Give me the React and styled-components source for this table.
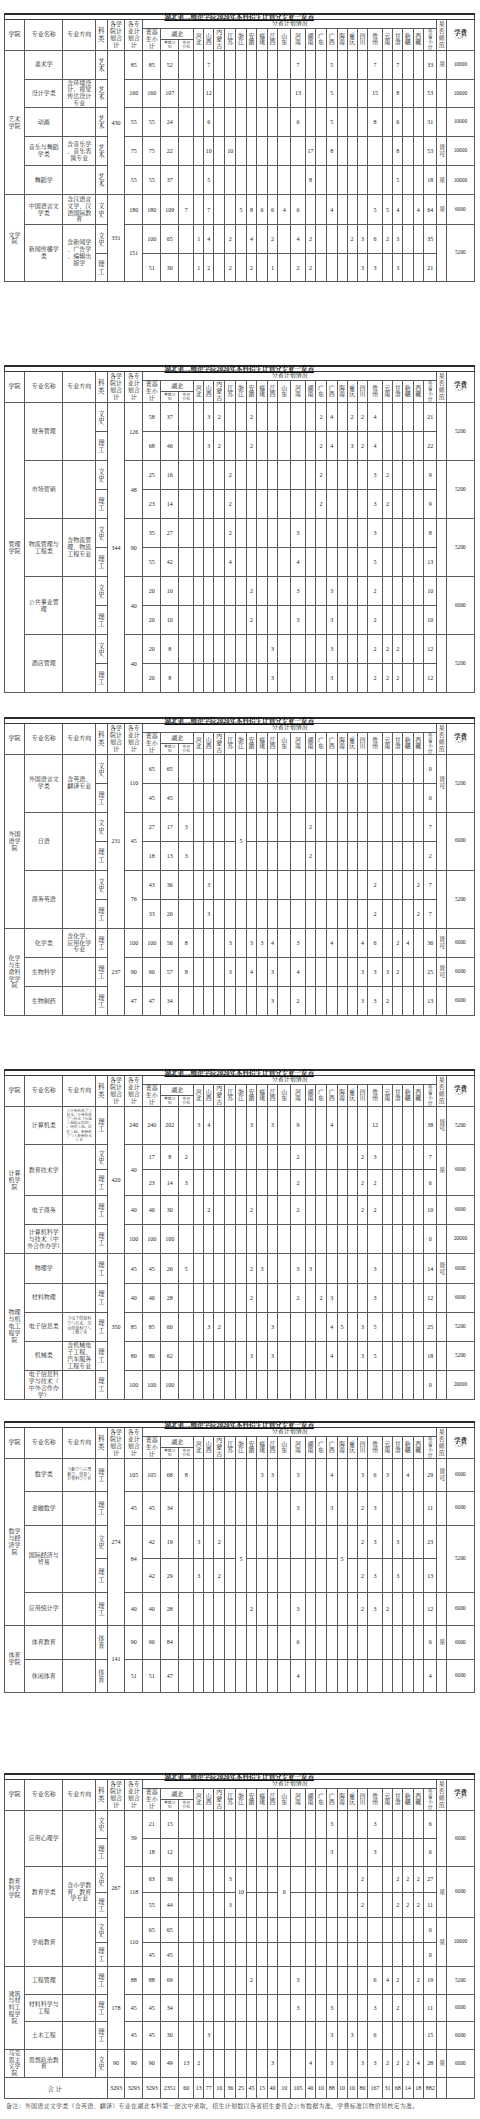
import React from "react";
import styled, { createGlobalStyle } from "styled-components";

const GlobalStyle = createGlobalStyle`
html, body {
  margin: 0;
  padding: 0;
  background: #fff;
}
body {
  font-family: "Liberation Serif", "Noto Serif CJK SC", "Noto Sans CJK SC", serif;
  color: #1a1a1a;
}
`;

const PROVS = ["河北", "山西", "内蒙古", "江苏", "浙江", "安徽", "福建", "江西", "山东", "河南", "湖南", "广东", "广西", "海南", "重庆", "四川", "贵州", "云南", "甘肃", "新疆", "西藏"];

const COLS = [20, 38.3, 32.7, 11.7, 17.6, 18, 18, 18, 15,
    10, 10, 11, 11, 10.7, 10.3, 10.4, 10.6, 13, 14.4, 10.6, 10.7, 10.7, 10, 10, 10.6, 14.4, 10.6, 10, 10.4, 10.6,
    13, 10, 27];

const TITLE = "湖北第二师范学院2020年本科招生计划分专业一览表";

// ---------------- data ----------------

const TABLES = [
    [
        { h: 28.6, c: ["艺术学院", 5], m: ["美术学"], d: [""], k: "艺术", ct: ["430", 5], mt: ["85"], s: 85, hb: 52, p: { 山西: 7, 河南: 7, 广西: 5, 贵州: 7, 甘肃: 7 }, o: 33, n: ["是"], f: ["10000"] },
        { h: 28.4, m: ["设计学类"], d: ["含环境设计、视觉传达设计专业"], k: "艺术", mt: ["160"], s: 160, hb: 107, p: { 山西: 12, 河南: 13, 广西: 5, 贵州: 15, 甘肃: 8 }, o: 53, n: [""], f: ["10000"] },
        { h: 29, m: ["动画"], d: [""], k: "艺术", mt: ["55"], s: 55, hb: 24, p: { 山西: 6, 河南: 6, 广西: 5, 贵州: 8, 甘肃: 6 }, o: 31, n: [""], f: ["10000"] },
        { h: 29, m: ["音乐与舞蹈学类"], d: ["含音乐学、音乐表演专业"], k: "艺术", mt: ["75"], s: 75, hb: 22, p: { 山西: 10, 江苏: 10, 湖南: 17, 广西: 8, 甘肃: 8 }, o: 53, n: ["皆可"], f: ["10000"] },
        { h: 29.3, m: ["舞蹈学"], d: [""], k: "艺术", mt: ["55"], s: 55, hb: 37, p: { 山西: 5, 湖南: 8, 甘肃: 5 }, o: 18, n: ["是"], f: ["10000"] },
        { h: 29.3, c: ["文学院", 3], m: ["中国语言文学类"], d: ["含汉语言文学、汉语国际教育"], k: "文史", ct: ["331", 3], mt: ["180"], s: 180, hb: 109, zx: 7, p: { 山西: 7, 浙江: 5, 安徽: 8, 福建: 6, 江西: 6, 山东: 4, 河南: 6, 广西: 4, 贵州: 5, 云南: 5, 甘肃: 4, 西藏: 4 }, o: 64, n: ["是"], f: ["6000"] },
        { h: 29, m: ["新闻传播学类", 2], d: ["含新闻学、广告学、编辑出版学", 2], k: "文史", mt: ["151", 2], s: 100, hb: 65, p: { 河北: 1, 山西: 4, 江苏: 2, 安徽: 4, 江西: 2, 河南: 4, 湖南: 2, 重庆: 2, 四川: 3, 贵州: 6, 云南: 2, 甘肃: 3 }, o: 35, n: ["", 2], f: ["5200", 2] },
        { h: 28.7, k: "理工", s: 51, hb: 30, p: { 河北: 1, 山西: 2, 江苏: 2, 安徽: 2, 江西: 1, 河南: 2, 湖南: 2, 四川: 3, 贵州: 3, 甘肃: 3 }, o: 21 },
    ],
    [
        { h: 29.05, c: ["管理学院", 10], m: ["财务管理", 2], d: ["", 2], k: "文史", ct: ["344", 10], mt: ["126", 2], s: 58, hb: 37, p: { 山西: 3, 内蒙古: 2, 安徽: 2, 广东: 2, 广西: 4, 重庆: 2, 四川: 2, 贵州: 4 }, o: 21, n: ["", 2], f: ["5200", 2] },
        { h: 29.05, k: "理工", s: 68, hb: 46, p: { 山西: 3, 内蒙古: 2, 安徽: 2, 广东: 2, 广西: 4, 重庆: 3, 四川: 2, 贵州: 4 }, o: 22 },
        { h: 29.05, m: ["市场营销", 2], d: ["", 2], k: "文史", mt: ["48", 2], s: 25, hb: 16, p: { 江苏: 2, 广东: 2, 贵州: 3, 云南: 2 }, o: 9, n: ["", 2], f: ["5200", 2] },
        { h: 29.05, k: "理工", s: 23, hb: 14, p: { 江苏: 2, 广东: 2, 贵州: 3, 云南: 2 }, o: 9 },
        { h: 29.05, m: ["物流管理与工程类", 2], d: ["含物流管理、物流工程专业", 2], k: "文史", mt: ["90", 2], s: 35, hb: 27, p: { 江苏: 2, 河南: 3, 贵州: 3 }, o: 8, n: ["", 2], f: ["5200", 2] },
        { h: 29.05, k: "理工", s: 55, hb: 42, p: { 江苏: 4, 河南: 4, 贵州: 5 }, o: 13 },
        { h: 29.05, m: ["公共事业管理", 2], d: ["", 2], k: "文史", mt: ["40", 2], s: 20, hb: 10, p: { 安徽: 2, 河南: 3, 广西: 3, 贵州: 2 }, o: 10, n: ["", 2], f: ["6000", 2] },
        { h: 29.05, k: "理工", s: 20, hb: 10, p: { 安徽: 2, 河南: 3, 广西: 3, 贵州: 2 }, o: 10 },
        { h: 29.05, m: ["酒店管理", 2], d: ["", 2], k: "文史", mt: ["40", 2], s: 20, hb: 8, p: { 江西: 3, 广西: 3, 贵州: 2, 云南: 2, 甘肃: 2 }, o: 12, n: ["", 2], f: ["5200", 2] },
        { h: 29.05, k: "理工", s: 20, hb: 8, p: { 江西: 3, 广西: 3, 贵州: 2, 云南: 2, 甘肃: 2 }, o: 12 },
    ],
    [
        { h: 29, c: ["外国语学院", 6], m: ["外国语言文学类", 2], d: ["含英语、翻译专业", 2], k: "文史", ct: ["231", 6], mt: ["110", 2], s: 65, hb: 65, o: 0, n: ["皆可", 2], f: ["5200", 2] },
        { h: 28.7, k: "理工", s: 45, hb: 45, o: 0 },
        { h: 29, m: ["日语", 2], d: ["", 2], k: "文史", mt: ["45", 2], s: 27, hb: 17, zx: 3, p: { 浙江: [5, 2], 湖南: 2 }, o: 7, n: ["", 2], f: ["6000", 2] },
        { h: 29, k: "理工", s: 18, hb: 13, zx: 3, p: { 湖南: 2 }, skip: ["浙江"], o: 2 },
        { h: 29.3, m: ["商务英语", 2], d: ["", 2], k: "文史", mt: ["76", 2], s: 43, hb: 36, p: { 山西: 3, 贵州: 2, 西藏: 2 }, o: 7, n: ["", 2], f: ["5200", 2] },
        { h: 29, k: "理工", s: 33, hb: 26, p: { 山西: 3, 贵州: 2, 西藏: 2 }, o: 7 },
        { h: 29, c: ["化学与生命科学学院", 3], m: ["化学类"], d: ["含化学、应用化学专业"], k: "理工", ct: ["237", 3], mt: ["100"], s: 100, hb: 56, zx: 8, p: { 江苏: 3, 安徽: 3, 福建: 3, 江西: 4, 河南: 3, 广西: 4, 四川: 4, 贵州: 6, 甘肃: 2, 新疆: 4 }, o: 36, n: ["皆可"], f: ["6000"] },
        { h: 29, m: ["生物科学"], d: [""], k: "理工", mt: ["90"], s: 90, hb: 57, zx: 8, p: { 江苏: 3, 安徽: 4, 江西: 3, 河南: 4, 四川: 3, 贵州: 3, 云南: 3, 甘肃: 2 }, o: 25, n: ["皆可"], f: ["6000"] },
        { h: 29.3, m: ["生物制药"], d: [""], k: "理工", mt: ["47"], s: 47, hb: 34, p: { 江西: 3, 河南: 2, 四川: 3, 贵州: 3, 云南: 2 }, o: 13, n: [""], f: ["6000"] },
    ],
    [
        { h: 38, c: ["计算机学院", 5], m: ["计算机类"], d: ["含计算机科学与技术、计算机科学与技术（卓越工程师实验班）、网络工程、软件工程、数据科学与大数据技术专业", 1, 3.6], k: "理工", ct: ["420", 5], mt: ["240"], s: 240, hb: 202, p: { 河北: 3, 山西: 4, 安徽: 3, 江西: 3, 河南: 9, 广西: 4, 贵州: 12 }, o: 38, n: ["皆可"], f: ["5200"] },
        { h: 25.4, m: ["教育技术学", 2], d: ["", 2], k: "文史", mt: ["40", 2], s: 17, hb: 8, zx: 2, p: { 河南: 2, 四川: 2, 贵州: 3 }, o: 7, n: ["是", 2], f: ["6000", 2] },
        { h: 25.6, k: "理工", s: 23, hb: 14, zx: 3, p: { 河南: 2, 四川: 2, 贵州: 2 }, o: 6 },
        { h: 29, m: ["电子商务"], d: [""], k: "理工", mt: ["40"], s: 40, hb: 30, p: { 山西: 2, 安徽: 2, 河南: 2, 四川: 2, 贵州: 2 }, o: 10, n: [""], f: ["6000"] },
        { h: 29.4, m: ["计算机科学与技术（中外合作办学）"], d: [""], k: "理工", mt: ["100"], s: 100, hb: 100, o: 0, n: [""], f: ["20000"] },
        { h: 29.3, c: ["物理与机电工程学院", 5], m: ["物理学"], d: [""], k: "理工", ct: ["350", 5], mt: ["45"], s: 45, hb: 26, zx: 5, p: { 安徽: 2, 福建: 3, 河南: 3, 湖南: 3, 贵州: 3 }, o: 14, n: ["皆可"], f: ["6000"] },
        { h: 29, m: ["材料物理"], d: [""], k: "理工", mt: ["40"], s: 40, hb: 28, p: { 安徽: 2, 河南: 2, 广东: 2, 广西: 3, 贵州: 3 }, o: 12, n: [""], f: ["6000"] },
        { h: 29, m: ["电子信息类"], d: ["含电子信息科学与技术、光电信息科学与工程专业", 1, 4], k: "理工", mt: ["85"], s: 85, hb: 60, p: { 山西: 3, 内蒙古: 2, 江西: 3, 广西: 4, 海南: 5, 四川: 3, 贵州: 5 }, o: 25, n: [""], f: ["5200"] },
        { h: 29, m: ["机械类"], d: ["含机械电子工程、汽车服务工程专业"], k: "理工", mt: ["80"], s: 80, hb: 62, p: { 安徽: 3, 江西: 3, 广西: 4, 四川: 3, 贵州: 5 }, o: 18, n: [""], f: ["5200"] },
        { h: 29, m: ["电子信息科学与技术（中外合作办学）"], d: [""], k: "理工", mt: ["100"], s: 100, hb: 100, o: 0, n: [""], f: ["20000"] },
    ],
    [
        { h: 32.7, c: ["数学与经济学院", 5], m: ["数学类"], d: ["含数学与应用数学、信息与计算科学专业", 1, 4], k: "理工", ct: ["274", 5], mt: ["105"], s: 105, hb: 68, zx: 8, p: { 福建: 3, 江西: 3, 河南: 3, 广西: 4, 四川: 3, 贵州: 6, 云南: 3, 新疆: 4 }, o: 29, n: ["皆可"], f: ["6000"] },
        { h: 34, m: ["金融数学"], d: [""], k: "理工", mt: ["45"], s: 45, hb: 34, p: { 河南: 3, 广西: 3, 四川: 2, 贵州: 3 }, o: 11, n: [""], f: ["6000"] },
        { h: 33.7, m: ["国际经济与贸易", 2], d: ["", 2], k: "文史", mt: ["84", 2], s: 42, hb: 19, p: { 河北: 3, 内蒙古: 2, 浙江: [5, 2], 海南: [5, 2], 四川: 2, 贵州: 3, 甘肃: 3 }, o: 23, n: ["", 2], f: ["5200", 2] },
        { h: 33.3, k: "理工", s: 42, hb: 29, p: { 河北: 3, 内蒙古: 2, 四川: 2, 贵州: 3, 甘肃: 3 }, skip: ["浙江", "海南"], o: 13 },
        { h: 33.3, m: ["应用统计学"], d: [""], k: "理工", mt: ["40"], s: 40, hb: 28, p: { 安徽: 2, 河南: 3, 四川: 2, 贵州: 3, 云南: 2 }, o: 12, n: [""], f: ["6000"] },
        { h: 34, c: ["体育学院", 2], m: ["体育教育"], d: [""], k: "体育", ct: ["141", 2], mt: ["90"], s: 90, hb: 84, p: { 河南: 6 }, o: 6, n: ["是"], f: ["6000"] },
        { h: 33.4, m: ["休闲体育"], d: [""], k: "体育", mt: ["51"], s: 51, hb: 47, p: { 河南: 4 }, o: 4, n: [""], f: ["6000"] },
    ],
    [
        { h: 27.7, c: ["教育科学学院", 6], m: ["应用心理学", 2], d: ["", 2], k: "文史", ct: ["267", 6], mt: ["39", 2], s: 21, hb: 15, p: { 广西: 3, 贵州: 3 }, o: 6, n: ["", 2], f: ["6000", 2] },
        { h: 28, k: "理工", s: 18, hb: 12, p: { 广西: 3, 贵州: 3 }, o: 6 },
        { h: 26, m: ["教育学类", 2], d: ["含小学教育、教育学专业", 2], k: "文史", mt: ["118", 2], s: 63, hb: 36, p: { 江苏: 3, 浙江: [10, 2], 山东: [6, 2], 四川: 2, 甘肃: 2, 新疆: 2, 西藏: 2 }, o: 27, n: ["是", 2], f: ["6000", 2] },
        { h: 25.7, k: "理工", s: 55, hb: 44, p: { 江苏: 3, 四川: 2, 甘肃: 2, 新疆: 2, 西藏: 2 }, skip: ["浙江", "山东"], o: 11 },
        { h: 25, m: ["学前教育", 2], d: ["", 2], k: "文史", mt: ["110", 2], s: 65, hb: 65, o: 0, n: ["是", 2], f: ["10000", 2] },
        { h: 23.6, k: "理工", s: 45, hb: 45, o: 0 },
        { h: 27.7, c: ["建筑与材料工程学院", 3], m: ["工程管理"], d: [""], k: "理工", ct: ["178", 3], mt: ["88"], s: 88, hb: 69, p: { 安徽: 2, 河南: 3, 贵州: 6, 云南: 4, 甘肃: 2, 西藏: 2 }, o: 19, n: [""], f: ["5200"] },
        { h: 27.7, m: ["材料科学与工程"], d: [""], k: "理工", mt: ["45"], s: 45, hb: 34, p: { 河南: 3, 广西: 3, 贵州: 3, 甘肃: 2 }, o: 11, n: [""], f: ["6000"] },
        { h: 27.3, m: ["土木工程"], d: [""], k: "理工", mt: ["45"], s: 45, hb: 30, p: { 山西: 3, 广西: 3, 重庆: 3, 贵州: 6 }, o: 15, n: [""], f: ["6000"] },
        { h: 27.7, c: ["马克思主义学院"], m: ["思想政治教育"], d: [""], k: "文史", ct: ["90"], mt: ["90"], s: 90, hb: 49, zx: 13, p: { 河北: 2, 江西: 3, 湖南: 4, 广西: 3, 四川: 3, 贵州: 3, 云南: 2, 甘肃: 2, 新疆: 2, 西藏: 4 }, o: 28, n: ["是"], f: ["6000"] },
    ],
];

const TOTALS = ["3293", "3293", "3293", "2351", "60",
    "13", "77", "10", "36", "25", "45", "15", "40", "10", "105", "40", "10", "88", "10", "10", "80", "167", "31", "68", "14", "18",
    "882"];

// ---------------- styles ----------------

const Page = styled.section`
height: ${p => p.$h}px;
padding-top: 12.5px;
box-sizing: border-box;
`;

const Sheet = styled.table`
table-layout: fixed;
border-collapse: collapse;
width: 469.3px;
margin-left: 4px;
border: 1.5px solid #3a3a3a;
`;

const Col = styled.col`
width: ${p => p.$w}px;
`;

const Row = styled.tr`
height: ${p => p.$h}px;
`;

const TitleCell = styled.th`
padding: 0;
border: 1px solid #3a3a3a;
border-top: 2px solid #2a2a2a;
font-size: 6.5px;
line-height: 3.6px;
font-weight: bold;
text-decoration: underline;
text-align: center;
white-space: nowrap;
color: #111;
`;

const HeadCell = styled.th`
padding: 0 1.5px;
border: 1px solid #5a5a5a;
font-weight: normal;
font-size: ${p => p.$fs || 6}px;
line-height: ${p => p.$lh || 1.15};
text-align: center;
vertical-align: middle;
line-break: anywhere;
color: #111;
`;

const FeeHead = styled.span`
display: block;
font-size: 6.5px;
font-weight: bold;
`;

const FeeUnit = styled.span`
display: block;
font-size: 3.4px;
`;

const TextCell = styled.td`
padding: 0 2px;
border: 1px solid #5a5a5a;
font-size: ${p => p.$fs || 6}px;
line-height: 1.15;
text-align: center;
vertical-align: middle;
line-break: anywhere;
overflow: hidden;
`;

const TypeCell = styled(TextCell)`
font-size: 6.3px;
`;

const NumCell = styled.td`
padding: 0;
border: 1px solid #5a5a5a;
font-size: 6px;
line-height: 1;
text-align: center;
vertical-align: middle;
white-space: nowrap;
`;

const FeeCell = styled(NumCell)`
font-size: 5.4px;
`;

const TotalLabel = styled.td`
padding: 0;
border: 1px solid #5a5a5a;
font-size: 6px;
text-align: center;
vertical-align: middle;
letter-spacing: 2px;
`;

const Note = styled.p`
margin: 3.5px 0 0 6px;
font-size: 6px;
line-height: 7px;
letter-spacing: 0.25px;
color: #333;
white-space: nowrap;
`;

// ---------------- parts ----------------

const Header = () => (
    <>
        <Row $h={5.6}>
            <TitleCell colSpan={33}>{TITLE}</TitleCell>
        </Row>
        <Row $h={9.4}>
            <HeadCell rowSpan={3}>学院</HeadCell>
            <HeadCell rowSpan={3}>专业名称</HeadCell>
            <HeadCell rowSpan={3}>专业方向</HeadCell>
            <HeadCell rowSpan={3} $fs={6.5}>科类</HeadCell>
            <HeadCell rowSpan={3}>各学院计划合计</HeadCell>
            <HeadCell rowSpan={3}>各专业计划合计</HeadCell>
            <HeadCell colSpan={25}>分省计划情况</HeadCell>
            <HeadCell rowSpan={3}>是否师范</HeadCell>
            <HeadCell rowSpan={3}>
                <FeeHead>学费</FeeHead>
                <FeeUnit>（元/年）</FeeUnit>
            </HeadCell>
        </Row>
        <Row $h={11.3}>
            <HeadCell rowSpan={2}>普高生小计</HeadCell>
            <HeadCell colSpan={2}>湖北</HeadCell>
            {PROVS.map(p => (
                <HeadCell key={p} rowSpan={2}>{p}</HeadCell>
            ))}
            <HeadCell rowSpan={2} $fs={5} $lh={1.05}>外省小计</HeadCell>
        </Row>
        <Row $h={10.7}>
            <HeadCell $fs={3.8}>普高计划</HeadCell>
            <HeadCell $fs={3.8}>专项计划</HeadCell>
        </Row>
    </>
);

const BodyRow = ({ r }) => (
    <Row $h={r.h}>
        {r.c && <TextCell rowSpan={r.c[1] || 1}>{r.c[0]}</TextCell>}
        {r.m && <TextCell rowSpan={r.m[1] || 1}>{r.m[0]}</TextCell>}
        {r.d && <TextCell rowSpan={r.d[1] || 1} $fs={r.d[2]}>{r.d[0]}</TextCell>}
        <TypeCell>{r.k}</TypeCell>
        {r.ct && <NumCell rowSpan={r.ct[1] || 1}>{r.ct[0]}</NumCell>}
        {r.mt && <NumCell rowSpan={r.mt[1] || 1}>{r.mt[0]}</NumCell>}
        <NumCell>{r.s}</NumCell>
        <NumCell>{r.hb}</NumCell>
        <NumCell>{r.zx}</NumCell>
        {PROVS.map(p => {
            if (r.skip && r.skip.includes(p)) return null;
            const v = r.p ? r.p[p] : undefined;
            if (Array.isArray(v)) return <NumCell key={p} rowSpan={v[1]}>{v[0]}</NumCell>;
            return <NumCell key={p}>{v}</NumCell>;
        })}
        <NumCell>{r.o}</NumCell>
        {r.n && <TextCell rowSpan={r.n[1] || 1}>{r.n[0]}</TextCell>}
        {r.f && <FeeCell rowSpan={r.f[1] || 1}>{r.f[0]}</FeeCell>}
    </Row>
);

const PlanTable = ({ rows, withTotal }) => (
    <Sheet>
        <colgroup>
            {COLS.map((w, i) => <Col key={i} $w={w} />)}
        </colgroup>
        <tbody>
            <Header />
            {rows.map((r, i) => <BodyRow key={i} r={r} />)}
            {withTotal && (
                <Row $h={21}>
                    <TotalLabel colSpan={4}>合计</TotalLabel>
                    {TOTALS.map((t, i) => <NumCell key={i}>{t}</NumCell>)}
                    <NumCell />
                    <NumCell />
                </Row>
            )}
        </tbody>
    </Sheet>
);

const App = () => {
    return (
        <>
            <GlobalStyle />
            {TABLES.map((rows, i) => {
                const last = i === TABLES.length - 1;
                return (
                    <Page key={i} $h={last ? 359 : 352}>
                        <PlanTable rows={rows} withTotal={last} />
                        {last && (
                            <Note>
                                备注：外国语言文学类（含英语、翻译）专业在湖北本科第一批次中录取，招生计划数以各省招生委员会公布数据为准，学费标准以物价局核定为准。
                            </Note>
                        )}
                    </Page>
                );
            })}
        </>
    );
};

export default App;
